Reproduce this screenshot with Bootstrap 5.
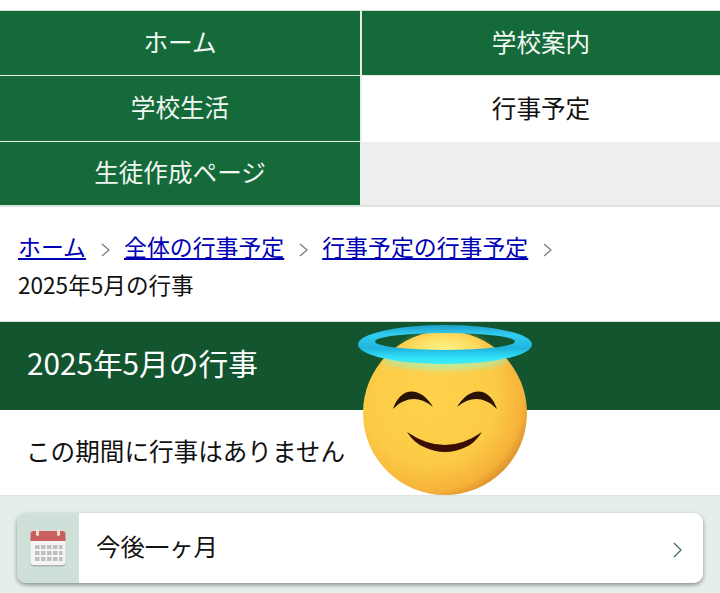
<!DOCTYPE html>
<html lang="ja">
<head>
<meta charset="utf-8">
<title>2025年5月の行事</title>
<link href="https://cdn.jsdelivr.net/npm/bootstrap@5.3.0/dist/css/bootstrap.min.css" rel="stylesheet">
<style>
html,body{height:593px;overflow:hidden}
body{font-family:"Noto Sans CJK JP","Noto Sans",sans-serif;color:#111;background:#fff;position:relative}
.menu-grid{margin-top:10px;display:grid;grid-template-columns:362px 1fr;grid-template-rows:65px 66px 63px;border-top:1px solid #cfe0d6;border-bottom:2px solid #dde5e0;height:197px}
.menu-cell{display:flex;align-items:center;justify-content:center;padding-bottom:4px;font-size:24.6px;line-height:1;text-decoration:none;color:#f2f7f4;background:#156a3a;border-bottom:1px solid #e6f0ea}
.menu-cell.left{border-right:2px solid #e6f0ea}
.menu-cell.current{background:#fff;color:#111;border-bottom:0}
.menu-cell.blank{background:#eee;border-bottom:0}
.menu-cell.last{border-bottom:0}
.crumbs{height:115px;padding:20px 18px 0;font-size:22.9px;line-height:38px;border-bottom:1px solid #d8dedb}
.crumbs a{color:#0000b4}
.crumbs svg{margin:0 14px 0 15px;vertical-align:-1px}
.crumb-now{font-size:22.6px}
.page-title{height:88px;background:#12552f;color:#fff;font-size:29.7px;padding:0 27px;line-height:82px}
.notice{height:86px;padding:0 26px;font-size:24.6px;line-height:80px;border-bottom:1px solid #dde5e0}
.lower{background:#e6eeea;padding:17px 17px 0;height:100px}
.month-card{height:70px;background:#fff;border-radius:9px;box-shadow:0 2px 4px rgba(0,0,0,.4);overflow:hidden;text-decoration:none;color:#111;font-size:24.4px}
.icon-box{width:62px;background:#cfe0d8}
.card-label{padding:0 0 4px 17px}
.card-arrow{margin:3px 21px 0 0}
.halo{position:absolute;left:356px;top:323px;width:180px;height:176px}
</style>
</head>
<body>
<nav class="menu-grid">
  <a class="menu-cell left" href="#">ホーム</a>
  <a class="menu-cell" href="#">学校案内</a>
  <a class="menu-cell left" href="#">学校生活</a>
  <a class="menu-cell current" href="#">行事予定</a>
  <a class="menu-cell left last" href="#">生徒作成ページ</a>
  <div class="menu-cell blank"></div>
</nav>
<div class="crumbs">
  <a href="#">ホーム</a><svg width="9" height="14" viewBox="0 0 9 14"><path d="M1 1l7 6-7 6" fill="none" stroke="#777" stroke-width="1.2"/></svg><a href="#">全体の行事予定</a><svg width="9" height="14" viewBox="0 0 9 14"><path d="M1 1l7 6-7 6" fill="none" stroke="#777" stroke-width="1.2"/></svg><a href="#">行事予定の行事予定</a><svg width="9" height="14" viewBox="0 0 9 14"><path d="M1 1l7 6-7 6" fill="none" stroke="#777" stroke-width="1.2"/></svg><br><span class="crumb-now">2025年5月の行事</span>
</div>
<h1 class="page-title m-0 fw-normal">2025年5月の行事</h1>
<div class="notice">この期間に行事はありません</div>
<div class="lower">
  <a class="month-card d-flex align-items-center" href="#">
    <span class="icon-box h-100 d-flex align-items-center justify-content-center flex-shrink-0">
      <svg width="36" height="38" viewBox="0 0 36 38">
        <rect x="0.5" y="2" width="35" height="35.500" rx="3" fill="#aab4ae"/>
        <rect x="0.5" y="2" width="35" height="34" rx="3" fill="#f4f4f2"/>
        <path d="M.5 12V5a3 3 0 0 1 3-3h29a3 3 0 0 1 3 3v7z" fill="#c9605f"/>
        <rect x="6" y="0" width="3" height="7" rx="1.5" fill="#f2dcd8"/>
        <rect x="27" y="0" width="3" height="7" rx="1.5" fill="#f2dcd8"/>
        <g fill="#bcc0be">
          <rect x="5" y="16" width="4.500" height="4"/><rect x="11" y="16" width="4.500" height="4"/><rect x="17" y="16" width="4.500" height="4"/><rect x="23" y="16" width="4.500" height="4"/><rect x="29" y="16" width="3.500" height="4"/>
          <rect x="5" y="22" width="4.500" height="4"/><rect x="11" y="22" width="4.500" height="4"/><rect x="17" y="22" width="4.500" height="4"/><rect x="23" y="22" width="4.500" height="4"/><rect x="29" y="22" width="3.500" height="4"/>
          <rect x="5" y="28" width="4.500" height="4"/><rect x="11" y="28" width="4.500" height="4"/><rect x="17" y="28" width="4.500" height="4"/><rect x="23" y="28" width="4.500" height="4"/><rect x="29" y="28" width="3.500" height="4"/>
        </g>
      </svg>
    </span>
    <span class="card-label flex-grow-1">今後一ヶ月</span>
    <svg class="card-arrow" width="9" height="16" viewBox="0 0 9 16"><path d="M1 1l7 7-7 7" fill="none" stroke="#3f6f5c" stroke-width="1.300"/></svg>
  </a>
</div>
<svg class="halo" viewBox="0 0 180 176" aria-hidden="true">
  <defs>
    <radialGradient id="face" cx="40%" cy="40%" r="68%">
      <stop offset="0" stop-color="#fed24c"/><stop offset=".6" stop-color="#fccb45"/><stop offset=".85" stop-color="#f6b23a"/><stop offset="1" stop-color="#cf7f24"/>
    </radialGradient>
    <radialGradient id="shine" cx="50%" cy="50%" r="50%">
      <stop offset="0" stop-color="#fff68c"/><stop offset="1" stop-color="#fff68c" stop-opacity="0"/>
    </radialGradient>
    <linearGradient id="ring" x1="0" y1="0" x2="0" y2="1">
      <stop offset="0" stop-color="#1f9fc8"/><stop offset=".25" stop-color="#32cdf0"/><stop offset=".6" stop-color="#1fb4dc"/><stop offset=".85" stop-color="#33e4fc"/><stop offset="1" stop-color="#3deaf5"/>
    </linearGradient>
    <filter id="soft" x="-10%" y="-40%" width="120%" height="180%"><feGaussianBlur stdDeviation="2.500"/></filter>
  </defs>
  <circle cx="89" cy="90" r="82" fill="url(#face)"/>
  <ellipse cx="89" cy="28" rx="50" ry="24" fill="url(#shine)"/>
  <ellipse cx="89" cy="38" rx="62" ry="9" fill="#a8ecb0" opacity=".65" filter="url(#soft)"/>
  <path fill-rule="evenodd" fill="url(#ring)" d="M2 21.500a87 19.500 0 1 0 174 0a87 19.500 0 1 0-174 0zM19 18.500a70 8.500 0 1 1 140 0a70 8.500 0 1 1-140 0z"/>
  <path d="M37 86C44 64 64 62 77 84C64 73 50 73 37 86z" fill="#2b1206"/>
  <path d="M141 86C134 64 114 62 101 84C114 73 128 73 141 86z" fill="#2b1206"/>
  <path d="M51 109Q89 135 126 109Q118 121 110 124Q89 134 68 124Q58 120 51 109z" fill="#3a0d04"/>
</svg>
</body>
</html>
